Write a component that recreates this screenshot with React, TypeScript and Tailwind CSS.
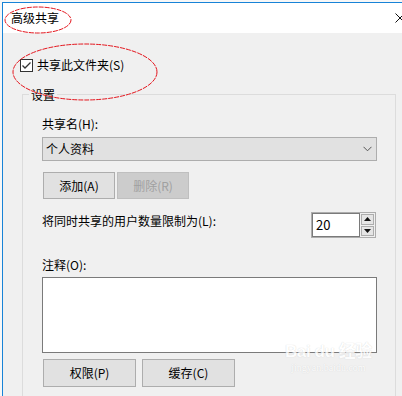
import React from "react";

const font = { fontFamily: '"Noto Sans CJK SC", "Noto Sans", sans-serif' };

const Btn = ({ label, disabled, w }: { label: string; disabled?: boolean; w: string }) => (
  <div
    className={`${w} flex items-center justify-center border text-[12px] leading-4 ${
      disabled ? "border-[#bfbfbf] bg-[#cccccc] text-[#a0a0a0]" : "border-[#adadad] bg-[#e1e1e1] text-black"
    }`}
  >
    {label}
  </div>
);

export default function App() {
  return (
    <div className="relative w-[402px] h-[396px] overflow-hidden bg-[#f4f4f4] flex flex-col" style={font}>
      {/* top strip above the dialog */}
      <div className="h-[2px] shrink-0 bg-[#f7f7f7]" />
      <div className="flex flex-1 min-h-0">
        <div className="w-[2px] shrink-0 bg-[#f7f7f7]" />
        {/* dialog window */}
        <div className="w-[412px] shrink-0 flex flex-col border-t border-l border-[#1883d7]">
          <div className="h-[30px] shrink-0 bg-white flex items-center justify-between pl-2 pr-[9px]">
            <span className="text-[12px] leading-4 text-black">高级共享</span>
            <svg width="10" height="10" viewBox="0 0 10 10">
              <path d="M0.5 0.5 L9.5 9.5 M9.5 0.5 L0.5 9.5" stroke="#111" strokeWidth="1" />
            </svg>
          </div>

          <div className="flex-1 bg-[#f0f0f0] flex flex-col">
            {/* checkbox */}
            <div className="h-4 mt-[24px] ml-[17px] flex items-center gap-[4px]">
              <div className="w-[13px] h-[13px] border border-[#333333] bg-white flex items-center justify-center">
                <svg width="11" height="11" viewBox="0 0 11 11">
                  <path d="M1.5 5.5 L4 8 L9.5 2.5" fill="none" stroke="#333" strokeWidth="1.3" />
                </svg>
              </div>
              <span className="text-[12px] leading-4 text-black">共享此文件夹(S)</span>
            </div>

            {/* settings group */}
            <div className="relative mt-[21px] ml-[19px] w-[374px] flex-1 border-t border-l border-r border-[#dcdcdc] pl-[19px] pr-[17px] pt-[21px] flex flex-col">
              <span className="absolute -top-[8px] left-[6px] px-[2px] bg-[#f0f0f0] text-[12px] leading-4 text-black">设置</span>

              <span className="text-[12px] leading-4 text-black">共享名(H):</span>
              <div className="mt-[5px] h-[24px] w-[335px] border border-[#adadad] bg-[#e1e1e1] flex items-center justify-between pl-[3px] pr-[4px]">
                <span className="text-[12px] leading-4 text-black">个人资料</span>
                <svg width="9" height="6" viewBox="0 0 9 6">
                  <path d="M0.5 0.8 L4.5 4.8 L8.5 0.8" fill="none" stroke="#555" strokeWidth="1" />
                </svg>
              </div>

              <div className="mt-[11px] ml-px flex gap-[2px] h-[27px]">
                <Btn label="添加(A)" w="w-[72px]" />
                <Btn label="删除(R)" w="w-[72px]" disabled />
              </div>

              <div className="mt-[13px] w-[335px] flex items-start justify-between">
                <span className="mt-px text-[12px] leading-4 text-black">将同时共享的用户数量限制为(L):</span>
                <div className="mr-px h-[26px] w-[65px] flex border border-[#adadad]">
                  <div className="w-[48px] bg-white border border-[#7a7a7a] flex items-center pl-[3px] text-[13px] text-black">20</div>
                  <div className="flex-1 flex flex-col gap-px p-px bg-[#f0f0f0]">
                    <div className="flex-1 bg-[#e5e5e5] border border-[#adadad] flex items-center justify-center">
                      <svg width="7" height="4" viewBox="0 0 7 4">
                        <path d="M0 4 L3.5 0 L7 4 Z" fill="#111" />
                      </svg>
                    </div>
                    <div className="flex-1 bg-[#e5e5e5] border border-[#adadad] flex items-center justify-center">
                      <svg width="7" height="4" viewBox="0 0 7 4">
                        <path d="M0 0 L3.5 4 L7 0 Z" fill="#111" />
                      </svg>
                    </div>
                  </div>
                </div>
              </div>

              <span className="mt-[19px] text-[12px] leading-4 text-black">注释(O):</span>
              <div className="mt-[4px] h-[76px] w-[335px] border border-[#7a7a7a] bg-white" />

              <div className="mt-[6px] ml-px flex gap-[6px] h-[28px]">
                <Btn label="权限(P)" w="w-[93px]" />
                <Btn label="缓存(C)" w="w-[93px]" />
              </div>
            </div>
          </div>
        </div>
      </div>

      {/* red annotation ellipses */}
      <svg className="absolute left-0 top-0 pointer-events-none" width="402" height="396">
        <ellipse cx="38" cy="20" rx="33" ry="13" fill="none" stroke="#e4151d" strokeWidth="1" strokeDasharray="5 1" />
        <ellipse cx="85" cy="72" rx="72" ry="28" fill="none" stroke="#e4151d" strokeWidth="1" strokeDasharray="5 1" />
      </svg>

      {/* watermark */}
      <div
        className="absolute left-[285px] top-[342px] flex flex-col items-center text-white opacity-80 pointer-events-none"
        style={{ fontFamily: '"Liberation Sans", "Noto Sans CJK SC", sans-serif', textShadow: "0 0 1px #c8c8c8" }}
      >
        <span className="text-[17px] font-bold leading-5 tracking-tight">Bai du 经验</span>
        <span className="text-[10px] leading-3" style={{ fontFamily: '"Liberation Serif", serif' }}>jingyan.baidu.com</span>
      </div>
    </div>
  );
}
